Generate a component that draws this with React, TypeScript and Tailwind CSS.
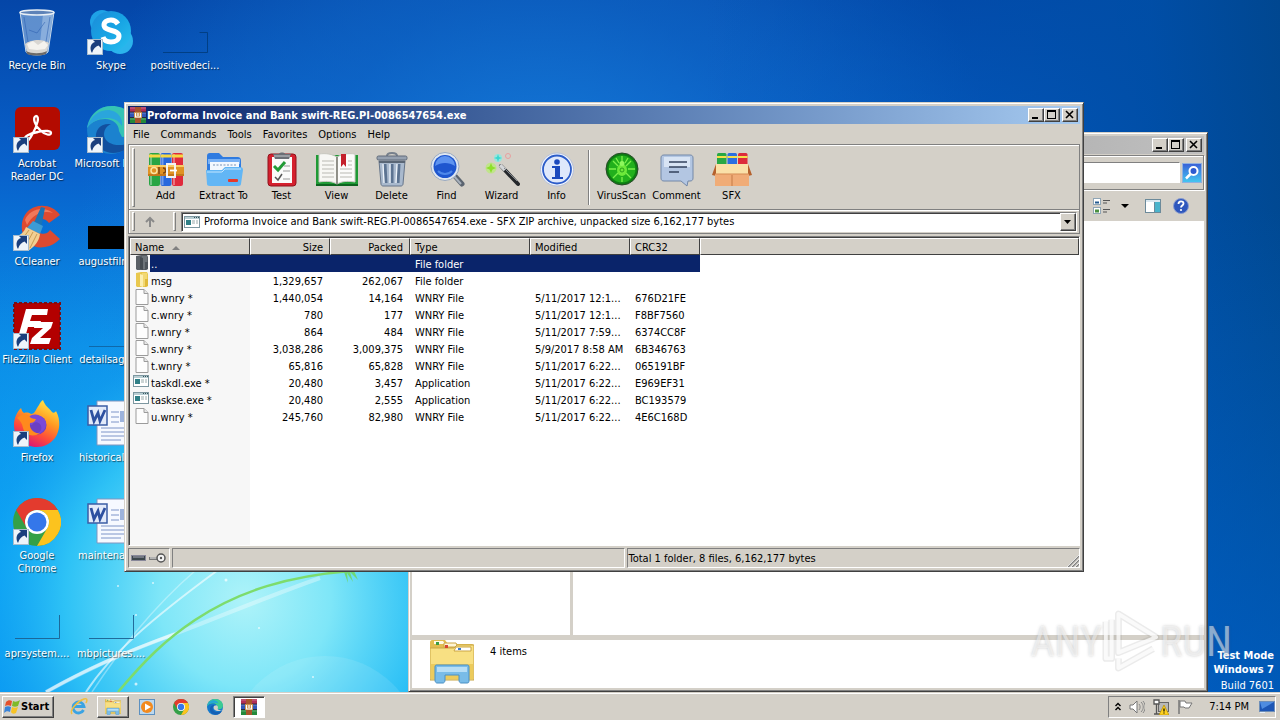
import React from "react";

const RAISED =
  "border border-t-white border-l-white border-r-[#404040] border-b-[#404040] shadow-[inset_-1px_-1px_0_#808080]";
const SUNKEN = "border border-t-[#808080] border-l-[#808080] border-r-white border-b-white";
const FRAME =
  "border border-t-[#d4d0c8] border-l-[#d4d0c8] border-r-[#404040] border-b-[#404040] shadow-[inset_1px_1px_0_#fff,inset_-1px_-1px_0_#808080]";

/* ---------- desktop icons (48 x 48) ---------- */

function Shortcut() {
  return (
    <g>
      <rect x="0.5" y="31.5" width="15" height="15" fill="#eef4fa" stroke="#a9bccd" />
      <path d="M5 45c-3-5-1-10 3-11l-2-2h8v8l-2.500-2.500c-3 1-5 3-6.500 7.500z" fill="#1b3f7d" />
    </g>
  );
}

function RecycleBinIcon() {
  return (
    <svg viewBox="0 0 48 48" className="size-12">
      <path d="M7 4h34l-6 40c-3 4-19 4-22 0z" fill="#a9c8ea" fillOpacity="0.55" stroke="#c8d9ea" strokeWidth="1" />
      <path d="M30 6h10l-6 38-8 1z" fill="#dbe9f7" fillOpacity="0.35" />
      <path d="M12 36c5-4 17-6 24-1l-2 9c-5 3-16 3-20 0z" fill="#d9d6d2" />
      <path d="M14 36l6-3 5 4 6-4 4 4-3 4-8 1-8-1z" fill="#f4f2ee" />
      <path d="M13 43c6 3 15 3 21 0l-1 3c-5 2-14 2-19 0z" fill="#6d6a68" />
      <ellipse cx="24" cy="4.500" rx="17" ry="2.500" fill="#5e83b8" stroke="#e8eff5" strokeWidth="1.500" />
      <path d="M11 9l4 25M37 9l-4 25M16 22l8 3 8-11" stroke="#2c5fae" strokeOpacity="0.55" fill="none" />
    </svg>
  );
}

function SkypeIcon() {
  return (
    <svg viewBox="0 0 48 48" className="size-12">
      <defs>
        <linearGradient id="sky" x1="0" y1="0" x2="1" y2="1">
          <stop offset="0" stopColor="#1d8ad8" />
          <stop offset="0.500" stopColor="#17a4e4" />
          <stop offset="1" stopColor="#2bc0ef" />
        </linearGradient>
      </defs>
      <circle cx="15" cy="14" r="12" fill="#1fa2e6" />
      <circle cx="33" cy="33" r="13" fill="#2bb4ec" />
      <circle cx="24" cy="23" r="20" fill="url(#sky)" />
      <path d="M31 16c-2-3-4-4-7-4-4 0-7 2-7 5 0 7 15 4 15 11 0 4-4 6-8 6s-7-2-8-5" fill="none" stroke="#fff" strokeWidth="5" />
      <Shortcut />
    </svg>
  );
}

function AcrobatIcon() {
  return (
    <svg viewBox="0 0 48 48" className="size-12">
      <rect x="2" y="1" width="45" height="43" rx="6" fill="#b30b00" />
      <path
        d="M12 34c-2-3 5-7 13-8 8-2 13-1 13 1 0 3-6 2-11-3-5-4-8-13-4-14 4 0 1 10-3 17-3 6-6 10-8 7z"
        fill="none"
        stroke="#fff"
        strokeWidth="2.300"
      />
      <Shortcut />
    </svg>
  );
}

function EdgeDesktopIcon() {
  return (
    <svg viewBox="0 0 48 48" className="size-12">
      <circle cx="24" cy="24" r="24" fill="#1b82cf" />
      <path d="M0 22C3 7 13 0 25 0c14 0 23 9 23 20 0 7-6 11-13 11l-3-6c0-7-6-12-14-12-7 0-14 3-18 9z" fill="#36c3b4" />
      <path d="M0 22C4 9 12 4 22 4c9 1 14 8 13 16-4-6-9-8-15-8-8 0-16 4-20 10z" fill="#2aa5dc" />
      <path d="M17 29c0-6 3-9 7-11-12-1-16 7-15 15 1 9 9 14 17 14 9 0 15-4 19-11-12 6-27 3-28-7z" fill="#12509f" />
      <Shortcut />
    </svg>
  );
}

function CCleanerIcon() {
  return (
    <svg viewBox="0 0 48 48" className="size-12">
      <path d="M47 11C41 2 30 0 22 3 10 7 7 20 10 30c3 10 12 15 22 13 6-1 11-4 15-8l-10-9c-4 6-12 5-14-3-1-8 8-11 13-4z" fill="#dd4a30" />
      <path d="M12 16C16 6 30 1 40 9c-10-3-20 1-26 12z" fill="#f2785a" />
      <path d="M28 3l4 1-4 20-8-3z" fill="#1974b7" />
      <path d="M20 17l10 5-3 8-13-6z" fill="#3b9bd5" />
      <path d="M13 23l14 7c-1 8-6 13-12 17C8 42 4 36 2 33c6-2 9-5 11-10z" fill="#f1cf93" />
      <path d="M16 26l-8 11M20 28l-7 13M24 30l-7 14" stroke="#c99950" strokeWidth="1" />
      <Shortcut />
    </svg>
  );
}

function FileZillaIcon() {
  return (
    <svg viewBox="0 0 48 48" className="size-12">
      <rect x="1" y="1" width="46" height="46" fill="#b30000" stroke="#7d0d10" strokeWidth="2" strokeDasharray="3 2" />
      <path d="M13 7h22l-1 6H19l-2 6h11l-2 6H15l-4 14H4z" fill="#fff" />
      <path d="M22 20h18l-2 6-11 10h11l-2 6H17l2-6 11-10h-9z" fill="#fff" />
      <Shortcut />
    </svg>
  );
}

function FirefoxIcon() {
  return (
    <svg viewBox="0 0 48 48" className="size-12">
      <defs>
        <linearGradient id="ff" x1="0.800" y1="0" x2="0.300" y2="1">
          <stop offset="0" stopColor="#fff04a" />
          <stop offset="0.400" stopColor="#ff9a22" />
          <stop offset="0.700" stopColor="#ff4b3a" />
          <stop offset="1" stopColor="#d5127c" />
        </linearGradient>
      </defs>
      <path d="M30 0c2 6 6 8 9 12 1 1 3 1 4-1 5 9 4 20-1 27-5 6-11 9-18 9C11 47 1 38 1 25 1 18 4 12 8 8c1 2 1 4 3 5 3-1 6 0 7 1 4 0 5-5 8-9 1-2 2-4 4-5z" fill="url(#ff)" />
      <circle cx="24" cy="25" r="9.500" fill="#6b3fc4" />
      <path d="M16 17c5-5 14-2 17 5 1 7-5 13-11 12 6-1 8-6 5-10-3-3-7-2-8 1-4 0-5-5-3-8z" fill="#7a49d8" />
      <path d="M4 18c4-4 9-5 12-2 1 2 4 3 7 3-1 3-4 4-6 4-1 6 4 11 10 10-7 5-15 2-17-5-1-5-3-8-6-10z" fill="#ff8a1d" />
      <Shortcut />
    </svg>
  );
}

function ChromeIcon({ size = "size-12", shortcut = false }: { size?: string; shortcut?: boolean }) {
  return (
    <svg viewBox="0 0 48 48" className={size}>
      <circle cx="24" cy="24" r="24" fill="#34a047" />
      <path d="M3.200 12A24 24 0 0 1 44.800 12H24a12 12 0 0 0-10.400 18z" fill="#e33b2e" />
      <path d="M44.800 12A24 24 0 0 1 24 48l10.400-18A12 12 0 0 0 24 12z" fill="#fcc31e" />
      <circle cx="24" cy="24" r="12" fill="#fff" />
      <circle cx="24" cy="24" r="9.500" fill="#3477ea" />
      {shortcut && <Shortcut />}
    </svg>
  );
}

function WordIcon() {
  return (
    <svg viewBox="0 0 48 48" className="size-12">
      <path d="M10 1h36v44H10z" fill="#f6f9ff" stroke="#8095bf" />
      <path d="M24 12h8M24 17h8M24 22h8M14 28h28M14 32h28M14 36h28M14 40h20" stroke="#7d94c8" />
      <rect x="33" y="11" width="9" height="11" fill="#9db3dc" />
      <rect x="1" y="6" width="19" height="19" fill="#e2eafa" stroke="#3b5da5" strokeWidth="1.500" />
      <path d="M4 10l3 11 4-8 2 8 5-11" fill="none" stroke="#2d50a0" strokeWidth="2.800" />
    </svg>
  );
}

function BlackThumb() {
  return (
    <svg viewBox="0 0 48 48" className="size-12">
      <rect x="1" y="22" width="47" height="23" fill="#000" />
    </svg>
  );
}

function FaintThumb({ variant }: { variant: "corner" | "line" | "tall" }) {
  return (
    <svg viewBox="0 0 48 48" className="size-12">
      {variant === "corner" && <path d="M2 44.500h44.500V24.500h-8" fill="none" stroke="#003a78" strokeOpacity="0.8" />}
      {variant === "line" && <path d="M2 44.500h46" stroke="#0f5e9a" strokeOpacity="0.8" />}
      {variant === "tall" && <path d="M2 42.500h44.500V19" fill="none" stroke="#1b5f90" strokeOpacity="0.9" />}
    </svg>
  );
}

type DeskItem = { label: string; icon: React.ReactNode };

const DESKTOP: DeskItem[] = [
  { label: "Recycle Bin", icon: <RecycleBinIcon /> },
  { label: "Acrobat Reader DC", icon: <AcrobatIcon /> },
  { label: "CCleaner", icon: <CCleanerIcon /> },
  { label: "FileZilla Client", icon: <FileZillaIcon /> },
  { label: "Firefox", icon: <FirefoxIcon /> },
  { label: "Google Chrome", icon: <ChromeIcon shortcut /> },
  { label: "aprsystem....", icon: <FaintThumb variant="tall" /> },
  { label: "Skype", icon: <SkypeIcon /> },
  { label: "Microsoft Edge", icon: <EdgeDesktopIcon /> },
  { label: "augustfilm....", icon: <BlackThumb /> },
  { label: "detailsago....", icon: <FaintThumb variant="line" /> },
  { label: "historicale....", icon: <WordIcon /> },
  { label: "maintenan....", icon: <WordIcon /> },
  { label: "mbpictures....", icon: <FaintThumb variant="tall" /> },
  { label: "positivedeci...", icon: <FaintThumb variant="corner" /> },
];

/* ---------- wallpaper ---------- */

function Wallpaper() {
  return (
    <svg viewBox="0 0 1280 692" preserveAspectRatio="none" className="absolute inset-0 size-full" aria-hidden="true">
      <defs>
        <linearGradient id="base" x1="0" y1="0" x2="0" y2="1">
          <stop offset="0" stopColor="#0446a8" />
          <stop offset="0.250" stopColor="#0862cc" />
          <stop offset="0.500" stopColor="#0a8ee8" />
          <stop offset="0.800" stopColor="#04a2f6" />
          <stop offset="1" stopColor="#0498f4" />
        </linearGradient>
        <radialGradient id="glow" gradientUnits="userSpaceOnUse" cx="245" cy="600" r="430">
          <stop offset="0" stopColor="#aef3f9" />
          <stop offset="0.200" stopColor="#7ee6f8" />
          <stop offset="0.420" stopColor="#35c8f6" stopOpacity="0.850" />
          <stop offset="0.600" stopColor="#1aa4f0" stopOpacity="0.400" />
          <stop offset="1" stopColor="#0a80e0" stopOpacity="0" />
        </radialGradient>
        <radialGradient id="haze" gradientUnits="userSpaceOnUse" cx="540" cy="220" r="460">
          <stop offset="0" stopColor="#1a84e0" stopOpacity="0.850" />
          <stop offset="0.500" stopColor="#1270d0" stopOpacity="0.550" />
          <stop offset="1" stopColor="#1a84e0" stopOpacity="0" />
        </radialGradient>
        <linearGradient id="right" x1="0" y1="0" x2="1" y2="0">
          <stop offset="0.550" stopColor="#0052b4" stopOpacity="0" />
          <stop offset="0.900" stopColor="#004ea6" stopOpacity="0.950" />
          <stop offset="1" stopColor="#00478f" stopOpacity="0.950" />
        </linearGradient>
        <linearGradient id="lower" x1="0" y1="0" x2="0" y2="1">
          <stop offset="0.300" stopColor="#0060c4" stopOpacity="0" />
          <stop offset="1" stopColor="#0060c8" stopOpacity="0.700" />
        </linearGradient>
      </defs>
      <rect width="1280" height="692" fill="url(#base)" />
      <rect width="1280" height="692" fill="url(#haze)" />
      <rect width="1280" height="692" fill="url(#right)" />
      <rect x="1000" width="280" height="692" fill="url(#lower)" />
      <rect width="1280" height="692" fill="url(#glow)" />
      <circle cx="325" cy="752" r="96" fill="#fff" fillOpacity="0.100" />
      <path d="M46 692C100 662 140 647 180 632 240 608 280 592 320 578" fill="none" stroke="#fff" strokeOpacity="0.350" strokeWidth="4" />
      <path d="M46 692C90 667 130 650 175 634" fill="none" stroke="#fff" strokeOpacity="0.600" strokeWidth="3" />
      <path d="M86 692C110 655 150 620 218 570" fill="none" stroke="#fff" strokeOpacity="0.600" strokeWidth="2" />
      <path d="M92 692C120 650 150 610 196 570" fill="none" stroke="#fff" strokeOpacity="0.350" strokeWidth="1.500" />
      <path d="M118 692C145 660 165 640 195 620 240 590 290 576 350 571" fill="none" stroke="#7ddc6c" strokeWidth="2.500" />
      <path d="M344 572l4 11-1-10 6 9-3-10 8 8-4-9" fill="#6fd873" />
      <g fill="#fff" fillOpacity="0.700">
        <circle cx="226" cy="580" r="1.500" />
        <circle cx="118" cy="586" r="1" />
        <circle cx="153" cy="583" r="1" />
        <circle cx="136" cy="615" r="1" />
        <circle cx="136" cy="684" r="1.500" />
        <circle cx="259" cy="628" r="1" />
        <circle cx="313" cy="677" r="1" />
      </g>
    </svg>
  );
}

/* ---------- shared window pieces ---------- */

function CaptionButtons() {
  const btn = `flex h-3.5 w-4 items-center justify-center bg-[#d4d0c8] ${RAISED}`;
  return (
    <div className="flex items-center pr-0.5">
      <button aria-label="Minimize" className={btn}>
        <svg viewBox="0 0 12 10" className="h-2.5 w-3"><path d="M2 7h6v2H2z" /></svg>
      </button>
      <button aria-label="Maximize" className={btn}>
        <svg viewBox="0 0 12 10" className="h-2.5 w-3"><path d="M1 0h9v9H1zM2 2v6h7V2z" fillRule="evenodd" /></svg>
      </button>
      <button aria-label="Close" className={`ml-0.5 ${btn}`}>
        <svg viewBox="0 0 12 10" className="h-2.5 w-3"><path d="M2 1l7 7M9 1L2 8" stroke="#000" strokeWidth="1.600" /></svg>
      </button>
    </div>
  );
}

function RarIcon({ size = "size-4" }: { size?: string }) {
  return (
    <svg viewBox="0 0 16 16" className={`shrink-0 ${size}`}>
      <rect x="0" y="0" width="16" height="5" fill="#b22f58" />
      <rect x="0" y="5" width="16" height="6" fill="#3156b8" />
      <rect x="0" y="11" width="16" height="5" fill="#23893a" />
      <path d="M0 1h16M0 6h16M0 12h16" stroke="#fff" strokeOpacity="0.300" />
      <path d="M0 5h16M0 10.500h16" stroke="#222" strokeWidth="0.800" />
      <rect x="5" y="0" width="6" height="16" fill="#a8552b" />
      <rect x="4" y="5" width="8" height="6" fill="#c98f4a" />
      <path d="M5.500 6v4h5V6M8 6v3" stroke="#fff" strokeWidth="1.200" fill="none" />
    </svg>
  );
}

function ExeIcon() {
  return (
    <svg viewBox="0 0 16 14" className="h-3.5 w-4 shrink-0">
      <rect x="0.500" y="1.500" width="15" height="11" fill="#fff" stroke="#7d97a0" />
      <path d="M1 2h14v2H1z" fill="#b9ced3" />
      <path d="M10 2.500h1M12 2.500h1M14 2.500h1" stroke="#35545c" />
      <rect x="2" y="5" width="5" height="5" fill="#2f7f86" />
      <path d="M8 6h3M8 8h3M13 5v4" stroke="#9aa" />
    </svg>
  );
}

function FileIcon() {
  return (
    <svg viewBox="0 0 14 16" className="h-4 w-3.5 shrink-0">
      <path d="M1 .5h8l4 4v11H1z" fill="#fdfdfd" stroke="#9b9b9b" />
      <path d="M9 .5v4h4" fill="#e8e8e8" stroke="#9b9b9b" />
    </svg>
  );
}

function FolderIcon({ dark = false }: { dark?: boolean }) {
  return (
    <svg viewBox="0 0 14 16" className="h-4 w-3.5 shrink-0">
      <path d="M1 1l5-1h6l1 2v12l-2 1H2l-1-1z" fill={dark ? "#5a6066" : "#e9c84e"} />
      <path d="M7 1h5v13H7z" fill={dark ? "#6d7479" : "#f2d873"} />
      <path d="M5 2l3 1v12l-3-1z" fill={dark ? "#454c52" : "#fbeeb0"} />
      <path d="M10 7h3v7l-3 1z" fill={dark ? "#4e555b" : "#e0ba3a"} />
    </svg>
  );
}

/* ---------- archiver toolbar icons (36 x 36) ---------- */

function AddIcon() {
  return (
    <svg viewBox="0 0 36 36" className="size-9">
      <rect x="1" y="1" width="11" height="33" rx="2" fill="#27a544" />
      <rect x="12.500" y="1" width="11" height="33" rx="2" fill="#2768dd" />
      <rect x="24" y="1" width="11" height="33" rx="2" fill="#e02a3c" />
      <path d="M3 2v31M14.500 2v31M26 2v31" stroke="#fff" strokeOpacity="0.350" strokeWidth="2" />
      <path d="M1 4h11M12.500 4h11M24 4h11" stroke="#f6d743" strokeWidth="3" />
      <rect x="0" y="13" width="36" height="11" fill="#e09224" />
      <path d="M0 14h36" stroke="#f8cc66" strokeWidth="2" />
      <path d="M0 23h36" stroke="#a85c10" />
      <circle cx="6" cy="18.500" r="3" fill="none" stroke="#fae3a0" strokeWidth="1.500" />
      <path d="M11 15v7M15 16c3 0 4 5 0 5" stroke="#7c4310" strokeWidth="1.500" fill="none" />
      <rect x="19" y="12" width="8" height="13" fill="none" stroke="#f2f2f2" strokeWidth="2" />
      <path d="M22 18.500h7" stroke="#fff" strokeWidth="1.800" />
    </svg>
  );
}

function ExtractIcon() {
  return (
    <svg viewBox="0 0 38 36" className="h-9 w-[38px]">
      <path d="M2 4c0-2 1-3 3-3h9l4 4h14c3 0 4 1 4 4v12H2z" fill="#2f7be0" />
      <path d="M3 7h32v5H3z" fill="#79b1f4" />
      <path d="M5 10h29v11H5z" fill="#f3f8fe" />
      <path d="M8 13h24" stroke="#7a93b5" strokeDasharray="2 1.500" />
      <path d="M1 18h16l3-3h15c2 0 3 1 3 3l-2 14c0 1-1 2-3 2H5c-2 0-3-1-3-2z" fill="#62b6f5" />
      <path d="M2 20h15l3-3h16" stroke="#c3e6ff" fill="none" />
      <rect x="23" y="27" width="10" height="3" rx="1" fill="#e6392a" />
    </svg>
  );
}

function TestIcon() {
  return (
    <svg viewBox="0 0 36 36" className="size-9">
      <rect x="4" y="2" width="28" height="32" rx="3" fill="#d5202e" stroke="#8f121c" />
      <path d="M8 5h20v26H8z" fill="#fafafa" />
      <path d="M9 2h6c0-2 6-2 6 0h6l-2 5H11z" fill="#6a6f76" />
      <path d="M10 4h16" stroke="#c8ccd0" />
      <path d="M10 14l4 4 7-8" fill="none" stroke="#239b37" strokeWidth="3" />
      <path d="M19 19h7M20 14h6M19 27h7" stroke="#999" />
      <path d="M11 25l3 3 4-6" fill="none" stroke="#555" strokeWidth="1.500" />
    </svg>
  );
}

function ViewIcon() {
  return (
    <svg viewBox="0 0 42 36" className="h-9 w-[42px]">
      <path d="M0 3h42v31H0z" fill="#1f9a35" />
      <path d="M0 32h42v2H0z" fill="#0e6320" />
      <path d="M3 2c7-1 13 0 18 3v27c-5-3-11-3-18-2z" fill="#f7f7f4" stroke="#c8c8c0" />
      <path d="M39 2c-7-1-13 0-18 3v27c5-3 11-3 18-2z" fill="#fbfbfa" stroke="#c8c8c0" />
      <path d="M21 5v27" stroke="#77776f" strokeWidth="1.500" />
      <path d="M6 9h12M6 13h12M6 17h12M6 21h12M6 25h12M24 17h12M24 21h12M24 25h12M32 13h4M32 9h4" stroke="#b9b9b3" />
      <path d="M25 2h5v13l-2.500-3-2.500 3z" fill="#c4202c" />
    </svg>
  );
}

function DeleteIcon() {
  return (
    <svg viewBox="0 0 36 36" className="size-9">
      <path d="M13 4c0-4 10-4 10 0" fill="none" stroke="#77808c" strokeWidth="2" />
      <rect x="3" y="4" width="30" height="4" rx="1.500" fill="#96a1b0" stroke="#606b7a" />
      <path d="M5 9h26l-2 23c0 1-1 2-2 2H9c-1 0-2-1-2-2z" fill="#a9b9cd" stroke="#66758a" />
      <path d="M11 12l1 19M18 12v19M25 12l-1 19" stroke="#5c7391" strokeWidth="3" />
      <path d="M9 12l1 19M16 12v19M23 12l-1 19" stroke="#edf3fa" strokeWidth="1.300" />
      <path d="M5 10h26" stroke="#5a6675" strokeWidth="2" />
    </svg>
  );
}

function FindIcon() {
  return (
    <svg viewBox="0 0 36 36" className="size-9">
      <path d="M25 23l8 9" stroke="#5b6470" strokeWidth="5" strokeLinecap="round" />
      <path d="M24 23l8 9" stroke="#a7b0bb" strokeWidth="2" />
      <circle cx="16" cy="14.500" r="14" fill="#dfe7f1" stroke="#9aa9bf" />
      <circle cx="16" cy="14.500" r="11.500" fill="#1e56cf" />
      <path d="M6 14a10 10 0 0 1 20 0c-6-4-14-4-20 0z" fill="#5d93f0" />
      <path d="M9 19c4 4 10 4 14 0" stroke="#4d87ea" strokeWidth="2" fill="none" />
    </svg>
  );
}

function WizardIcon() {
  return (
    <svg viewBox="0 0 36 36" className="size-9">
      <path d="M17 14l17 18" stroke="#25282c" strokeWidth="4" strokeLinecap="round" />
      <path d="M16 13l5 5" stroke="#d4d6d8" strokeWidth="3.500" />
      <path d="M20 16l13 13" stroke="#83888e" strokeWidth="1" />
      <circle cx="7" cy="16" r="5.500" fill="#b8ec71" fillOpacity="0.700" />
      <path d="M7 11l1.500 3.500L12 16l-3.500 1.500L7 21l-1.500-3.500L2 16l3.500-1.500z" fill="#8ee02c" />
      <circle cx="14" cy="6" r="4" fill="#80eee4" fillOpacity="0.700" />
      <path d="M14 2l1 3 3 1-3 1-1 3-1-3-3-1 3-1z" fill="#38d8d0" />
      <circle cx="24" cy="4" r="2.500" fill="none" stroke="#e8a0a0" />
    </svg>
  );
}

function InfoIcon() {
  return (
    <svg viewBox="0 0 36 36" className="size-9">
      <circle cx="18" cy="17.500" r="16.500" fill="#f3f6fc" stroke="#b4bfd8" />
      <circle cx="18" cy="17.500" r="14" fill="#dfe8fb" stroke="#2c5cc9" strokeWidth="1.800" />
      <circle cx="18" cy="10" r="2.800" fill="#1b49be" />
      <path d="M13 14h8v11h3v2H13v-2h3v-9h-3z" fill="#1b49be" />
    </svg>
  );
}

function VirusIcon() {
  return (
    <svg viewBox="0 0 36 36" className="size-9">
      <circle cx="18" cy="17" r="16" fill="#0e7d12" stroke="#2a4a2a" />
      <circle cx="18" cy="17" r="13.500" fill="#22b01c" />
      <path d="M18 4v6M9 9l5 5M27 9l-5 5M5 17h7M24 17h7M9 26l5-5M27 26l-5-5M12 6l3 5M24 6l-3 5M18 25v5" stroke="#7df04c" strokeWidth="1.300" />
      <ellipse cx="18" cy="18" rx="5" ry="6" fill="#6de83a" />
      <circle cx="18" cy="11.500" r="2.500" fill="#8df75c" />
      <circle cx="18" cy="18" r="2" fill="none" stroke="#2aa01c" />
    </svg>
  );
}

function CommentIcon() {
  return (
    <svg viewBox="0 0 36 36" className="size-9">
      <path d="M5 3h26c2 0 3 1 3 3v20c0 2-1 3-3 3h-2l-1 5-6-5H5c-2 0-3-1-3-3V6c0-2 1-3 3-3z" fill="#b3c6e2" stroke="#7388a8" />
      <path d="M5 5h26v10H5z" fill="#d8e4f4" />
      <path d="M10 10h18M10 15h18M10 20h10" stroke="#33415c" strokeWidth="1.500" />
    </svg>
  );
}

function SfxIcon() {
  return (
    <svg viewBox="0 0 40 36" className="h-9 w-10">
      <rect x="5" y="1" width="9.500" height="14" rx="1.500" fill="#28a845" />
      <rect x="15.500" y="1" width="9.500" height="14" rx="1.500" fill="#2b6fe0" />
      <rect x="26" y="1" width="9.500" height="14" rx="1.500" fill="#dd2b3b" />
      <path d="M5 5h9.500M15.500 5H25M26 5h9.500" stroke="#f6df4a" strokeWidth="2" />
      <path d="M4 12h32l3 10H1z" fill="#fae0a8" />
      <path d="M4 12L0 23l4 1zM36 12l4 11-4 1z" fill="#b5612d" />
      <path d="M3 22h34v12H3z" fill="#f0ac77" />
      <path d="M20 23v11" stroke="#c47a46" />
      <path d="M3 22h34" stroke="#d58b55" />
    </svg>
  );
}

function ToolButton({ label, wide = false, children }: { label: string; wide?: boolean; children: React.ReactNode }) {
  return (
    <button className={`flex shrink-0 flex-col items-center pt-1.5 ${wide ? "w-[61px]" : "w-[55px]"}`}>
      {children}
      <span className="leading-4 whitespace-nowrap">{label}</span>
    </button>
  );
}

function Gripper() {
  return <span className="my-0.5 ml-0.5 w-[3px] shrink-0 self-stretch border border-t-white border-l-white border-r-[#808080] border-b-[#808080]" />;
}

/* ---------- archive listing ---------- */

type Row = { icon: "up" | "folder" | "file" | "exe"; name: string; size: string; packed: string; type: string; modified: string; crc: string };

const ROWS: Row[] = [
  { icon: "up", name: "..", size: "", packed: "", type: "File folder", modified: "", crc: "" },
  { icon: "folder", name: "msg", size: "1,329,657", packed: "262,067", type: "File folder", modified: "", crc: "" },
  { icon: "file", name: "b.wnry *", size: "1,440,054", packed: "14,164", type: "WNRY File", modified: "5/11/2017 12:1...", crc: "676D21FE" },
  { icon: "file", name: "c.wnry *", size: "780", packed: "177", type: "WNRY File", modified: "5/11/2017 12:1...", crc: "F8BF7560" },
  { icon: "file", name: "r.wnry *", size: "864", packed: "484", type: "WNRY File", modified: "5/11/2017 7:59...", crc: "6374CC8F" },
  { icon: "file", name: "s.wnry *", size: "3,038,286", packed: "3,009,375", type: "WNRY File", modified: "5/9/2017 8:58 AM", crc: "6B346763" },
  { icon: "file", name: "t.wnry *", size: "65,816", packed: "65,828", type: "WNRY File", modified: "5/11/2017 6:22...", crc: "065191BF" },
  { icon: "exe", name: "taskdl.exe *", size: "20,480", packed: "3,457", type: "Application", modified: "5/11/2017 6:22...", crc: "E969EF31" },
  { icon: "exe", name: "taskse.exe *", size: "20,480", packed: "2,555", type: "Application", modified: "5/11/2017 6:22...", crc: "BC193579" },
  { icon: "file", name: "u.wnry *", size: "245,760", packed: "82,980", type: "WNRY File", modified: "5/11/2017 6:22...", crc: "4E6C168D" },
];

const HEADERS = ["Name", "Size", "Packed", "Type", "Modified", "CRC32"];

function RowIcon({ kind }: { kind: Row["icon"] }) {
  if (kind === "up") return <FolderIcon dark />;
  if (kind === "folder") return <FolderIcon />;
  if (kind === "exe") return <ExeIcon />;
  return <FileIcon />;
}

function ArchiveTable() {
  const th =
    "h-[17px] border border-t-white border-l-white border-r-[#404040] border-b-[#404040] bg-[#d4d0c8] pt-0.5 pr-1.5 pb-0 pl-1 font-normal";
  return (
    <table className="w-full table-fixed border-separate border-spacing-0">
      <colgroup>
        <col className="w-[120px]" />
        <col className="w-20" />
        <col className="w-20" />
        <col className="w-[120px]" />
        <col className="w-[100px]" />
        <col className="w-[70px]" />
        <col />
      </colgroup>
      <thead>
        <tr className="leading-[13px]">
          {HEADERS.map((h, i) => (
            <th key={h} scope="col" className={`${th} ${i === 1 || i === 2 ? "text-right" : "text-left"}`}>
              {h}
              {i === 0 && (
                <svg viewBox="0 0 8 4" className="ml-2 inline h-1 w-2 align-middle"><path d="M4 0l4 4H0z" fill="#808080" /></svg>
              )}
            </th>
          ))}
          <td className={th} />
        </tr>
      </thead>
      <tbody>
        {ROWS.map((r) => {
          const sel = r.icon === "up" ? "bg-[#0a246a] text-white" : "";
          const cell = `h-[17px] pt-0.5 pr-[7px] pb-0 pl-[5px] whitespace-nowrap leading-[15px] ${sel}`;
          return (
            <tr key={r.name}>
              <td className="h-[17px] p-0 leading-[15px] whitespace-nowrap">
                <div className="flex h-[17px]">
                  <span className="flex w-5 shrink-0 items-start justify-end pr-px">
                    <RowIcon kind={r.icon} />
                  </span>
                  <span className={`flex-1 pt-0.5 pl-px ${sel}`}>{r.name}</span>
                </div>
              </td>
              <td className={`${cell} text-right`}>{r.size}</td>
              <td className={`${cell} text-right`}>{r.packed}</td>
              <td className={cell}>{r.type}</td>
              <td className={cell}>{r.modified}</td>
              <td className={cell}>{r.crc}</td>
              <td className="p-0" />
            </tr>
          );
        })}
      </tbody>
    </table>
  );
}

function ArchiverWindow() {
  return (
    <section className={`absolute top-[102px] bottom-[120px] left-[124px] flex w-3/4 flex-col bg-[#d4d0c8] p-[3px] ${FRAME}`}>
      <header className="flex h-[18px] shrink-0 items-center bg-linear-to-r from-[#0a246a] to-[#a6caf0] pl-0.5 text-white">
        <RarIcon />
        <h1 className="flex-1 pt-px pl-px text-[11px] leading-4 font-bold">Proforma Invoice and Bank swift-REG.PI-0086547654.exe</h1>
        <CaptionButtons />
      </header>
      <nav className="flex h-5 shrink-0 items-center gap-[11px] pt-0.5 pl-[5px]">
        {["File", "Commands", "Tools", "Favorites", "Options", "Help"].map((m) => (
          <button key={m}>{m}</button>
        ))}
      </nav>
      <div className="shrink-0 border border-[#808080] shadow-[inset_1px_1px_0_#fff]">
        <div className="flex h-16 pt-px pl-px">
          <Gripper />
          <div className="flex pl-[3px]">
            <ToolButton label="Add"><AddIcon /></ToolButton>
            <ToolButton label="Extract To" wide><ExtractIcon /></ToolButton>
            <ToolButton label="Test"><TestIcon /></ToolButton>
            <ToolButton label="View"><ViewIcon /></ToolButton>
            <ToolButton label="Delete"><DeleteIcon /></ToolButton>
            <ToolButton label="Find"><FindIcon /></ToolButton>
            <ToolButton label="Wizard"><WizardIcon /></ToolButton>
            <ToolButton label="Info"><InfoIcon /></ToolButton>
            <span className="mx-1 my-1 w-0.5 border-r border-l border-r-white border-l-[#808080]" />
            <ToolButton label="VirusScan"><VirusIcon /></ToolButton>
            <ToolButton label="Comment"><CommentIcon /></ToolButton>
            <ToolButton label="SFX"><SfxIcon /></ToolButton>
          </div>
        </div>
        <div className="flex h-6 items-center border-t border-t-[#808080] pr-0.5 pl-px shadow-[inset_0_1px_0_#fff]">
          <Gripper />
          <button aria-label="Up one level" className="flex w-9 justify-center pr-1.5">
            <svg viewBox="0 0 12 12" className="size-3"><path d="M6 11V2M2 6l4-4 4 4" fill="none" stroke="#8a8a8a" strokeWidth="2" /></svg>
          </button>
          <Gripper />
          <div className={`ml-[5px] flex h-5 flex-1 items-center bg-white pl-0.5 ${SUNKEN} shadow-[inset_1px_1px_0_#404040]`}>
            <ExeIcon />
            <input
              aria-label="Archive path"
              readOnly
              value="Proforma Invoice and Bank swift-REG.PI-0086547654.exe - SFX ZIP archive, unpacked size 6,162,177 bytes"
              className="min-w-0 flex-1 bg-transparent pt-0.5 pl-1 outline-none"
            />
            <button aria-label="Show history" className={`flex h-full w-4 items-center justify-center bg-[#d4d0c8] ${RAISED}`}>
              <svg viewBox="0 0 8 4" className="h-1 w-2"><path d="M0 0h7L3.500 4z" /></svg>
            </button>
          </div>
        </div>
      </div>
      <div className={`mt-0.5 min-h-0 flex-1 overflow-hidden bg-[linear-gradient(to_right,#f7f7f7_121px,#fff_121px)] pt-px pl-px ${SUNKEN} shadow-[inset_1px_1px_0_#404040]`}>
        <ArchiveTable />
      </div>
      <footer className="mt-0.5 flex h-5 shrink-0 gap-0.5">
        <div className={`flex w-[42px] items-center justify-center ${SUNKEN}`}>
          <svg viewBox="0 0 36 10" className="h-2.5 w-9">
            <rect x="0.500" y="2.500" width="14" height="5" fill="#3c474b" stroke="#889" />
            <path d="M2 4h11" stroke="#aab" />
            <path d="M18 5.500h10" stroke="#777" strokeWidth="3" />
            <path d="M19 5h8" stroke="#eee" />
            <circle cx="30" cy="5" r="4" fill="#f4f4f4" stroke="#555" strokeWidth="1.500" />
            <circle cx="30" cy="5" r="1.200" fill="#555" />
          </svg>
        </div>
        <div className={`flex-1 ${SUNKEN}`} />
        <div className={`relative flex flex-1 items-center pt-0.5 pl-px ${SUNKEN}`}>
          Total 1 folder, 8 files, 6,162,177 bytes
          <svg viewBox="0 0 12 12" className="absolute right-0 bottom-0 size-3">
            <path d="M1 12L12 1M5 12l7-7M9 12l3-3" stroke="#808080" strokeWidth="1.500" />
            <path d="M0 12L12 0M4 12l8-8M8 12l4-4" stroke="#fff" strokeWidth="0.700" />
          </svg>
        </div>
      </footer>
    </section>
  );
}

/* ---------- explorer window ---------- */

function LibraryIcon({ size = "size-11" }: { size?: string }) {
  return (
    <svg viewBox="0 0 44 44" className={size}>
      <path d="M0 2c0-1 1-2 2-2h13l3 4h24c1 0 2 1 2 2v34H0z" fill="#e2bd50" />
      <path d="M4 1h9l2 3H4z" fill="#fffbe6" />
      <path d="M14 3h12l2 4H14z" fill="#fff5d5" stroke="#cba545" />
      <path d="M0 8h24l3-3h17v35H0z" fill="#f8e083" stroke="#c8a546" />
      <path d="M26 7h15v4H24z" fill="#fff" stroke="#cba545" />
      <path d="M6 2h3v3H6z" fill="#3a9c42" />
      <path d="M15 5h3v3h-3z" fill="#d64530" />
      <path d="M28 8h3v2h-3z" fill="#3a78c8" />
      <path d="M1 24h42v15H1z" fill="#eccb5c" />
      <path d="M5 27c0-2 1-2 2-2h30c1 0 2 0 2 2v13c0 2 0 3-2 3h-6c-1 0-2-1-2-3v-5H15v5c0 2-1 3-2 3H7c-1 0-2-1-2-3z" fill="#79bce8" stroke="#4a90c4" />
      <path d="M7 27h30v5H7z" fill="#b7def6" />
    </svg>
  );
}

function ExplorerWindow() {
  return (
    <section className={`absolute top-[132px] bottom-0 left-[408px] flex w-5/8 flex-col bg-[#d4d0c8] p-[3px] ${FRAME}`}>
      <header className="flex h-[18px] shrink-0 items-center justify-end bg-linear-to-r from-[#808080] to-[#c0c0c0]">
        <CaptionButtons />
      </header>
      <div className="mt-px flex h-[35px] shrink-0 items-center gap-0.5 border border-[#808080] pr-px pl-2 shadow-[inset_1px_1px_0_#fff,1px_1px_0_#fff]">
        <input aria-label="Search" className={`h-[21px] min-w-0 flex-1 bg-white ${SUNKEN}`} />
        <button aria-label="Go" className="flex size-5 items-center justify-center border border-[#8fb0e0] bg-linear-to-b from-[#3a62d8] to-[#45c5f0]">
          <svg viewBox="0 0 16 16" className="size-4">
            <circle cx="9.500" cy="6" r="4" fill="#2e5bd0" stroke="#fff" strokeWidth="2" />
            <path d="M6.500 9L2 13.500" stroke="#fff" strokeWidth="2.500" />
          </svg>
        </button>
      </div>
      <div className="flex h-[31px] shrink-0 items-center justify-end gap-3 pr-[15px]">
        <button aria-label="Change view" className="mr-1 flex items-center gap-[11px]">
          <svg viewBox="0 0 17 16" className="h-4 w-[17px]">
            <rect x="0.500" y="0.500" width="7" height="6" fill="#fff" stroke="#8fa5b5" />
            <rect x="0.500" y="9.500" width="7" height="6" fill="#fff" stroke="#8fa5b5" />
            <path d="M2 4.500h4" stroke="#235a90" strokeWidth="2" />
            <path d="M2 13h4" stroke="#4b9040" strokeWidth="3" />
            <path d="M10 2.500h7M10 5h4M10 11.500h7M10 14h4" stroke="#555" />
          </svg>
          <svg viewBox="0 0 8 4" className="h-1 w-2"><path d="M0 0h8L4 4z" /></svg>
        </button>
        <button aria-label="Preview pane">
          <svg viewBox="0 0 16 14" className="h-3.5 w-4">
            <rect x="0.500" y="0.500" width="15" height="13" fill="#fff" stroke="#6c8a9a" />
            <path d="M1 1h14v2H1z" fill="#dbe8f0" />
            <rect x="10" y="3" width="5" height="10" fill="#4bb4cc" />
            <path d="M9.500 3v10" stroke="#6c8a9a" />
          </svg>
        </button>
        <button aria-label="Help">
          <svg viewBox="0 0 16 16" className="size-4">
            <circle cx="8" cy="8" r="7.500" fill="#2f57bd" stroke="#8a9ccf" />
            <path d="M5.500 6c0-3.500 5-3.500 5-.5 0 2-2.500 2-2.500 4" fill="none" stroke="#fff" strokeWidth="1.800" />
            <circle cx="8" cy="12" r="1.100" fill="#fff" />
          </svg>
        </button>
      </div>
      <div className="flex min-h-0 flex-1 bg-white">
        <div className="w-1/5" />
        <div className="w-[3px] bg-[#d4d0c8]" />
        <div className="flex-1" />
      </div>
      <footer className="mt-[5px] flex h-12 shrink-0 items-start gap-4 bg-white pl-[18px]">
        <LibraryIcon />
        <span className="pt-1 leading-4">4 items</span>
      </footer>
    </section>
  );
}

/* ---------- taskbar ---------- */

function StartFlag() {
  return (
    <svg viewBox="0 0 16 14" className="h-3.5 w-4">
      <path d="M2 2c2-2 4-2 6-1L7 6C5 5 3 5 1 6z" fill="#e5512b" />
      <path d="M9 1c2 1 4 1 7-1l-2 6c-2 1-4 1-6 0z" fill="#7fba28" />
      <path d="M1 7c2-1 4-1 6 0l-1 5c-2-1-4-1-6 1z" fill="#3a84d8" />
      <path d="M8 7c2 1 4 1 6 0l-2 6c-2 1-4 1-5-1z" fill="#f7c324" />
    </svg>
  );
}

function Taskbar() {
  const quick = "flex h-[22px] w-8 items-center justify-center";
  return (
    <footer className="relative flex h-7 shrink-0 items-center gap-0.5 border-t border-t-[#d4d0c8] bg-[#d4d0c8] px-0.5 shadow-[inset_0_1px_0_#fff]">
      <button className={`mt-px flex h-[22px] w-[52px] items-center gap-px pl-px text-[11px] font-bold ${RAISED}`}>
        <StartFlag />
        Start
      </button>
      <div className="mt-px ml-[7px] flex flex-1 items-center gap-0.5">
        <button aria-label="Internet Explorer" className={quick}>
          <svg viewBox="0 0 18 18" className="size-4.5">
            <path d="M13.500 12A5.500 5.500 0 1 1 14 8.500H4.500" fill="none" stroke="#3aa3e3" strokeWidth="2.800" />
            <path d="M2 16C-1 12 8 3 14 1c4-1 3 2 2 4" fill="none" stroke="#f0c040" strokeWidth="1.500" />
          </svg>
        </button>
        <button aria-label="Windows Explorer" className={`${quick} ${RAISED}`}><LibraryIcon size="size-4" /></button>
        <button aria-label="Media Player" className={quick}>
          <svg viewBox="0 0 16 16" className="size-4">
            <rect x="0.500" y="0.500" width="15" height="15" fill="#bcd8ee" stroke="#5c90c0" />
            <circle cx="8" cy="8" r="6" fill="#f28a1e" />
            <path d="M6 4.500v7L12 8z" fill="#fff" />
          </svg>
        </button>
        <button aria-label="Google Chrome" className={quick}><ChromeIcon size="size-4" /></button>
        <button aria-label="Microsoft Edge" className={quick}>
          <svg viewBox="0 0 48 48" className="size-4">
            <circle cx="24" cy="24" r="24" fill="#1579cc" />
            <path d="M0 22C3 7 13 0 25 0c14 0 23 9 23 20 0 7-6 11-13 11-4 0-6-2-3-6 0-7-6-12-14-12-7 0-14 3-18 9z" fill="#3ccb93" />
            <path d="M0 22C4 9 12 4 22 4c7 1 11 5 12 10-5-4-30-5-34 8z" fill="#23a5d8" />
            <path d="M17 29c0-6 3-9 7-11-12-1-16 7-15 15 1 9 9 14 17 14 9 0 15-4 19-11-12 6-27 3-28-7z" fill="#1560b4" />
            <path d="M22 20c-4 4-3 12 6 15 6 2 13 1 18-3-5 3-14 1-14-3 2-3 1-8-3-10z" fill="#d4d0c8" />
          </svg>
        </button>
        <button aria-label="WinRAR" className={`${quick} bg-white ${SUNKEN} shadow-[inset_1px_1px_0_#404040]`}><RarIcon /></button>
      </div>
      <div className={`mt-px mr-0.5 flex h-[22px] items-center gap-2 pl-1.5 ${SUNKEN}`}>
        <svg viewBox="0 0 6 10" className="h-2.5 w-1.5"><path d="M.5 4L3 1.500 5.500 4M.5 8L3 5.500 5.500 8" fill="none" stroke="#000" strokeWidth="1.400" /></svg>
        <svg viewBox="0 0 16 14" className="h-3.5 w-4">
          <path d="M1 5h3l4-4v12L4 9H1z" fill="#fff" stroke="#777" />
          <path d="M10 4c1.500 2 1.500 4 0 6M12 2c3 3 3 7 0 10M14 1c3 4 3 8 0 12" fill="none" stroke="#888" />
        </svg>
        <svg viewBox="0 0 16 16" className="size-4">
          <rect x="5.500" y="3.500" width="10" height="9" fill="#b8b8b8" stroke="#666" />
          <path d="M1 1h5v4H1zM3.500 5v10M1 15h7" fill="#fff" stroke="#555" strokeWidth="1.300" />
          <path d="M11 6l5 10H6z" fill="#ffd21f" stroke="#b38a00" strokeWidth="0.700" />
          <path d="M11 9.500v3M11 13.500v1" stroke="#000" strokeWidth="1.200" />
        </svg>
        <svg viewBox="0 0 16 16" className="size-4">
          <path d="M2 1v14" stroke="#777" strokeWidth="1.500" />
          <path d="M3 2h5l1 2h6l-3 5H8L7 8H3z" fill="#fff" stroke="#777" />
        </svg>
        <time className="pt-px pr-0.5 pl-2">7:14 PM</time>
        <svg viewBox="0 0 16 14" className="h-3.5 w-4">
          <rect x="0.500" y="1.500" width="15" height="10" fill="#1d56b5" stroke="#6f8fb8" />
          <path d="M1 2h14L3 9z" fill="#4f8ce0" />
          <path d="M1 12h5v1H1z" fill="#e6eef8" />
        </svg>
      </div>
    </footer>
  );
}

/* ---------- page ---------- */

function Watermark() {
  return (
    <div
      className="pointer-events-none absolute right-12 bottom-[18px] flex items-center text-[42px] leading-none text-white/50 [text-shadow:0_0_3px_rgba(90,90,90,0.3)]"
      style={{ fontFamily: '"Roboto Condensed", "Liberation Sans Narrow", "Liberation Sans", sans-serif' }}
    >
      <span>ANY</span>
      <svg viewBox="0 0 60 66" className="h-[64px] w-[58px] overflow-visible">
        <g fill="none" stroke="#777" strokeOpacity="0.150" strokeWidth="7" strokeLinejoin="round">
          <path d="M17 4v40L56 28z" />
          <path d="M4 12v38h6V10M17 50v10l36-20" />
        </g>
        <g fill="none" stroke="#fff" strokeOpacity="0.750" strokeWidth="4" strokeLinejoin="round">
          <path d="M17 4v40L56 28z" />
          <path d="M4 12v38h6V10M17 50v10l36-20" />
        </g>
      </svg>
      <span>RUN</span>
    </div>
  );
}

export default function App() {
  return (
    <div
      className="flex h-screen min-h-[600px] flex-col overflow-hidden text-[11px] text-black"
      style={{ fontFamily: '"DejaVu Sans Condensed", "Noto Sans", sans-serif' }}
    >
      <main className="relative min-h-0 flex-1 overflow-hidden">
        <Wallpaper />
        <ul className="relative grid w-max auto-cols-[74px] grid-flow-col grid-rows-[repeat(7,98px)] pt-2">
          {DESKTOP.map((d) => (
            <li key={d.label}>
              <a href="#" className="flex flex-col items-center text-center leading-[13px] text-white [text-shadow:1px_1px_1px_rgba(0,0,0,0.6)]">
                {d.icon}
                <span className="mt-[3px] max-w-[74px]">{d.label}</span>
              </a>
            </li>
          ))}
        </ul>
        <div className="absolute right-1.5 -bottom-0.5 text-right text-[11px] text-white">
          <p className="leading-[14px] font-bold">Test Mode</p>
          <p className="leading-[14px] font-bold">Windows 7</p>
          <p className="leading-[17px]">Build 7601</p>
        </div>
        <ExplorerWindow />
        <ArchiverWindow />
        <Watermark />
      </main>
      <Taskbar />
    </div>
  );
}
